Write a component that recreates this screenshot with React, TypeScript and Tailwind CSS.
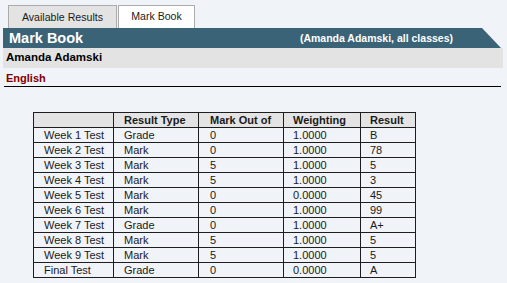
import React from "react";

const rows: [string, string, string, string, string][] = [
  ["Week 1 Test", "Grade", "0", "1.0000", "B"],
  ["Week 2 Test", "Mark", "0", "1.0000", "78"],
  ["Week 3 Test", "Mark", "5", "1.0000", "5"],
  ["Week 4 Test", "Mark", "5", "1.0000", "3"],
  ["Week 5 Test", "Mark", "0", "0.0000", "45"],
  ["Week 6 Test", "Mark", "0", "1.0000", "99"],
  ["Week 7 Test", "Grade", "0", "1.0000", "A+"],
  ["Week 8 Test", "Mark", "5", "1.0000", "5"],
  ["Week 9 Test", "Mark", "5", "1.0000", "5"],
  ["Final Test", "Grade", "0", "0.0000", "A"],
];

const pads = ["pl-[10px]", "pl-[10px]", "pl-[11px]", "pl-[9px]", "pl-[9px]"];

function Cell({ children, i, head }: { children: React.ReactNode; i: number; head?: boolean }) {
  return (
    <div
      className={`h-[15px] border-r border-b border-[#1e1e1e] flex items-center leading-none whitespace-nowrap ${pads[i]} ${
        head ? "bg-[#e4e4e4] font-bold" : ""
      }`}
    >
      {children}
    </div>
  );
}

export default function App() {
  return (
    <div className="w-[507px] h-[283px] bg-[#f0f3f7] overflow-hidden font-['Liberation_Sans',Arial,sans-serif] text-[#1a1a1a]">
      <div className="flex pl-[8px] pt-[5px] h-[28px]">
        <div className="w-[109px] h-[23px] border border-b-0 border-[#ababab] bg-[#e3e3e3] flex items-center justify-center text-[10.6px] pt-[1px]">
          Available Results
        </div>
        <div className="ml-[1px] w-[77px] h-[23px] border border-b-0 border-[#ababab] bg-white flex items-center justify-center text-[10.6px] pb-[1px]">
          Mark Book
        </div>
      </div>
      <div className="ml-[3px] w-[498px] h-[20px] bg-[#3b6378] [clip-path:polygon(0_0,calc(100%-19px)_0,100%_100%,0_100%)] flex items-center justify-between pl-[6px] pr-[48px] text-white">
        <span className="text-[14.5px] font-bold leading-none">Mark Book</span>
        <span className="text-[10.5px] font-bold leading-none">(Amanda Adamski, all classes)</span>
      </div>
      <div className="ml-[3px] w-[500px] h-[20px] bg-[#e3e3e3] flex items-center pl-[3px] text-[11.5px] font-bold text-black">
        Amanda Adamski
      </div>
      <div className="ml-[4px] w-[497px] h-[19px] border-b border-black pl-[2px] pt-[3px]">
        <div className="text-[11px] leading-[14px] font-bold text-[#800000]">English</div>
      </div>
      <div className="mt-[25px] ml-[33px] w-[383px] grid grid-cols-[80px_85px_85px_77px_55px] border-l border-t border-[#1e1e1e] text-[11px]">
        <Cell i={0} head>{""}</Cell>
        <Cell i={1} head>Result Type</Cell>
        <Cell i={2} head>Mark Out of</Cell>
        <Cell i={3} head>Weighting</Cell>
        <Cell i={4} head>Result</Cell>
        {rows.map((r, ri) =>
          r.map((c, ci) => (
            <Cell key={`${ri}-${ci}`} i={ci}>
              {c}
            </Cell>
          ))
        )}
      </div>
    </div>
  );
}
